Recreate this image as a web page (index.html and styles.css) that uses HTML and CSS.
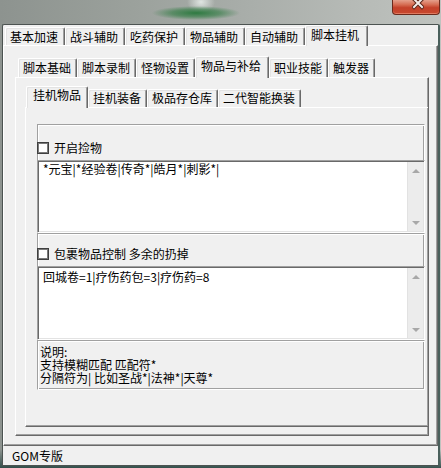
FILE: index.html
```html
<!DOCTYPE html>
<html lang="zh-CN">
<head>
<meta charset="utf-8">
<title>脚本挂机</title>
<link rel="stylesheet" href="styles.css">
</head>
<body>
<div class="titlebar">
  <div class="close">
    <svg class="close-x" width="12" height="10" viewBox="0 0 12 10">
      <path d="M2 -1 L10 7 M10 -1 L2 7" stroke="#5a2418" stroke-width="4" stroke-linecap="square"/>
      <path d="M2 -1 L10 7 M10 -1 L2 7" stroke="#f4ecea" stroke-width="2" stroke-linecap="square"/>
    </svg>
  </div>
</div>
<div class="window">
  <div class="tabs t1">
    <div class="tab">基本加速</div>
    <div class="tab">战斗辅助</div>
    <div class="tab">吃药保护</div>
    <div class="tab">物品辅助</div>
    <div class="tab">自动辅助</div>
    <div class="tab sel">脚本挂机</div>
  </div>
  <div class="panel p1">
    <div class="tabctl c2">
      <div class="tabs t2">
        <div class="tab">脚本基础</div>
        <div class="tab">脚本录制</div>
        <div class="tab">怪物设置</div>
        <div class="tab sel">物品与补给</div>
        <div class="tab">职业技能</div>
        <div class="tab">触发器</div>
      </div>
      <div class="panel p2">
        <div class="tabctl c3">
          <div class="tabs t3">
            <div class="tab sel">挂机物品</div>
            <div class="tab">挂机装备</div>
            <div class="tab">极品存仓库</div>
            <div class="tab">二代智能换装</div>
          </div>
          <div class="panel p3">
            <div class="group g1">
              <div class="check-row"><span class="checkbox"></span><span class="check-label">开启捡物</span></div>
            </div>
            <div class="edit e1">
              <div class="edit-text">*元宝|*经验卷|传奇*|皓月*|刺影*|</div>
              <div class="scrollbar"><span class="arrow up"></span><span class="arrow down"></span></div>
            </div>
            <div class="group g2">
              <div class="check-row"><span class="checkbox"></span><span class="check-label">包裹物品控制 多余的扔掉</span></div>
            </div>
            <div class="edit e2">
              <div class="edit-text">回城卷=1|疗伤药包=3|疗伤药=8</div>
              <div class="scrollbar"><span class="arrow up"></span><span class="arrow down"></span></div>
            </div>
            <div class="note">
              <div>说明:</div>
              <div>支持模糊匹配 匹配符*</div>
              <div>分隔符为| 比如圣战*|法神*|天尊*</div>
            </div>
          </div>
        </div>
      </div>
    </div>
  </div>
  <div class="status">GOM专版</div>
</div>
</body>
</html>
```

FILE: styles.css
```css
* { box-sizing: border-box; }
html, body { margin: 0; padding: 0; }
body {
  width: 441px;
  height: 468px;
  overflow: hidden;
  font-family: "Noto Sans CJK SC", "Noto Sans", sans-serif;
  font-size: 12px;
  color: #000;
  background:
    radial-gradient(ellipse 44px 7px at 196px 13px, rgba(40,120,60,0.95) 0%, rgba(46,122,64,0.6) 55%, rgba(46,122,64,0) 100%),
    radial-gradient(ellipse 14px 11px at 201px 2px, rgba(230,236,232,0.9), rgba(230,236,232,0)),
    linear-gradient(180deg, rgba(0,0,0,0) 0%, rgba(0,0,0,0) 96%, rgba(40,70,66,0.9) 100%),
    linear-gradient(90deg, #8d938f 0%, #9ba19c 30%, #a8ada9 55%, #b6bab6 80%, #bfc3bf 100%);
}

.titlebar {
  height: 24px;
  display: flex;
  justify-content: flex-end;
  padding-right: 1px;
}
.close {
  width: 48px;
  height: 15px;
  border: 1px solid #6b2a1c;
  border-top: none;
  border-radius: 0 0 4px 4px;
  background: linear-gradient(180deg, #e5a08c 0%, #d56a50 35%, #c4412a 55%, #c8492f 100%);
  box-shadow: inset 0 -1px #e07a60;
  display: flex;
  justify-content: center;
}
.close-x { margin-left: 3px; }

.window {
  margin-left: 2px;
  width: 438px;
  height: 442px;
  border: 1px solid #4c5351;
  border-right: 2px solid #4a605c;
  border-radius: 2px 2px 0 0;
  background: #f0f0f0;
  display: flex;
  flex-direction: column;
}

.tabs {
  display: flex;
  align-items: flex-end;
  flex: none;
}
.tab {
  white-space: nowrap;
  border: 1px solid #fff;
  border-bottom: none;
  border-right-color: #696969;
  box-shadow: inset -1px 0 #a0a0a0, inset 1px 1px #e3e3e3;
  border-radius: 2px 2px 0 0;
  background: #f0f0f0;
}
.tab.sel {
  position: relative;
  z-index: 1;
  margin-bottom: -1px;
}

.t1 { height: 20px; padding-left: 2px; }
.t1 .tab { height: 18px; line-height: 17px; padding: 0 6px 0 4px; }
.t1 .tab.sel { height: 21px; line-height: 18px; padding: 0 8px 0 5px; }

.t2 { height: 21px; padding-left: 3px; }
.t2 .tab { height: 19px; line-height: 18px; padding: 0 5px 0 4px; }
.t2 .tab.sel { height: 22px; line-height: 18px; padding: 0 7px 0 5px; }

.t3 { height: 21px; padding-left: 1px; }
.t3 .tab { height: 18px; line-height: 16px; padding: 0 5px 0 4px; }
.t3 .tab.sel { height: 22px; line-height: 16px; padding: 0 6px 0 6px; }

.panel {
  display: flex;
  flex-direction: column;
  border-top: 1px solid #fff;
  border-left: 1px solid #fff;
  border-bottom: 1px solid #696969;
}
.tabctl {
  flex: 1;
  display: flex;
  flex-direction: column;
}

.p1 {
  flex: 1;
  border-right: 1px solid #696969;
  box-shadow: inset -1px -1px #a0a0a0;
  padding: 10px 8px 9px 11px;
}
.p2 {
  flex: 1;
  border-right: 1px solid #696969;
  box-shadow: inset -1px -1px #a0a0a0;
  padding: 8px 0 8px 9px;
}
.p3 {
  flex: 1;
  box-shadow: inset 0 -1px #a0a0a0;
  padding: 16px 3px 0 11px;
}

.group {
  flex: none;
  border: 1px solid #a0a0a0;
  border-bottom: none;
  border-right-color: #fff;
  box-shadow: inset 1px 1px #fff, inset -1px 0 #a0a0a0;
}
.g1 { height: 36px; padding-top: 16px; }
.g2 { height: 33px; padding-top: 13px; }

.check-row {
  display: flex;
  align-items: center;
  height: 13px;
}
.checkbox {
  width: 12px;
  height: 12px;
  margin-left: -1px;
  background: #fff;
  border: 1px solid #3f3f3f;
  box-shadow: inset 0 0 0 1px #7a7a7a;
  flex: none;
}
.check-label {
  margin-left: 5px;
  line-height: 13px;
  white-space: nowrap;
}

.edit {
  flex: none;
  display: flex;
  background: #fff;
  border: 1px solid;
  border-color: #a0a0a0 #fff #fff #a0a0a0;
  box-shadow: inset 1px 1px #696969, inset -1px -1px #e3e3e3;
}
.e1 { height: 73px; }
.e2 { height: 74px; }
.edit-text {
  flex: 1;
  padding: 1px 0 0 5px;
  line-height: 14px;
  white-space: nowrap;
}
.e2 .edit-text { padding-top: 3px; }

.scrollbar {
  width: 16px;
  margin: 1px 1px 1px 0;
  background: #ececec;
  border-left: 1px solid #e2e2e2;
  display: flex;
  flex-direction: column;
  justify-content: space-between;
  align-items: center;
  padding: 7px 0 6px;
}
.arrow {
  width: 0;
  height: 0;
  border-left: 4px solid transparent;
  border-right: 4px solid transparent;
}
.arrow.up { border-bottom: 4px solid #a8a8a8; }
.arrow.down { border-top: 4px solid #a8a8a8; }

.note {
  flex: none;
  height: 50px;
  border: 1px solid;
  border-color: #a0a0a0 #fff #fff #a0a0a0;
  box-shadow: inset 1px 1px #fff, inset -1px -1px #a0a0a0;
  padding: 4px 0 0 2px;
  line-height: 13px;
  white-space: nowrap;
}

.status {
  flex: none;
  height: 19px;
  line-height: 19px;
  padding-left: 9px;
}
```
